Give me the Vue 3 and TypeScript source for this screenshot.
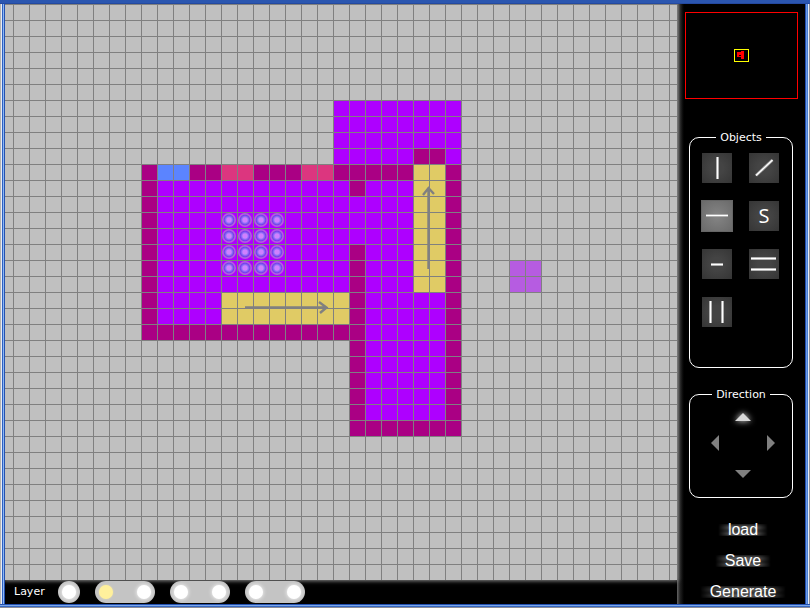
<script setup lang="ts">
import { ref } from 'vue'

const CELL = 16

interface Block {
  c: number
  r: number
  w: number
  h: number
  kind: 'floor' | 'wall' | 'glass' | 'door' | 'escalator' | 'pillar'
}

// Positions and sizes are counted in grid cells.
const blocks: Block[] = [
  { c: 20, r: 6, w: 8, h: 4, kind: 'floor' },
  { c: 8, r: 10, w: 13, h: 11, kind: 'floor' },
  { c: 21, r: 10, w: 7, h: 17, kind: 'floor' },
  { c: 8, r: 10, w: 20, h: 1, kind: 'wall' },
  { c: 8, r: 11, w: 1, h: 10, kind: 'wall' },
  { c: 9, r: 20, w: 12, h: 1, kind: 'wall' },
  { c: 21, r: 11, w: 1, h: 1, kind: 'wall' },
  { c: 21, r: 15, w: 1, h: 12, kind: 'wall' },
  { c: 22, r: 26, w: 6, h: 1, kind: 'wall' },
  { c: 27, r: 11, w: 1, h: 15, kind: 'wall' },
  { c: 25, r: 9, w: 2, h: 1, kind: 'wall' },
  { c: 9, r: 10, w: 2, h: 1, kind: 'glass' },
  { c: 13, r: 10, w: 2, h: 1, kind: 'door' },
  { c: 18, r: 10, w: 2, h: 1, kind: 'door' },
  { c: 25, r: 10, w: 2, h: 8, kind: 'escalator' },
  { c: 13, r: 18, w: 8, h: 2, kind: 'escalator' },
  { c: 31, r: 16, w: 2, h: 2, kind: 'pillar' },
]

const seats = Array.from({ length: 16 }, (_, i) => ({
  x: (13 + (i % 4)) * CELL + 8,
  y: (13 + Math.floor(i / 4)) * CELL + 8,
}))

const tools = [
  { id: 'vertical wall', d: 'M15.5 4V26' },
  { id: 'diagonal wall', d: 'M7 22.5L23.5 7' },
  { id: 'horizontal wall', d: 'M4 14.5H26' },
  { id: 'stairs', d: '' },
  { id: 'short wall', d: 'M9 15.5H21' },
  { id: 'horizontal corridor', d: 'M2 9.5H27M2 20.5H27' },
  { id: 'vertical corridor', d: 'M8.5 4V26M20.5 4V26' },
]

const directions = [
  { id: 'up', points: '0,12 8,4 16,12' },
  { id: 'left', points: '12,0 4,8 12,16' },
  { id: 'right', points: '4,0 12,8 4,16' },
  { id: 'down', points: '0,4 16,4 8,12' },
]

const layerGroups = [[0], [1, 2], [3, 4], [5, 6]]
const actions = ['load', 'Save', 'Generate']

const tool = ref('horizontal wall')
const direction = ref('up')
const layer = ref(1)
</script>

<template>
  <div class="window">
    <main class="editor">
      <svg class="map" role="img" aria-label="Floor plan">
        <defs>
          <pattern id="grid" width="16" height="16" patternUnits="userSpaceOnUse">
            <path d="M0 0H16V1H1V16H0Z" fill="#808080" />
          </pattern>
          <radialGradient id="seat">
            <stop offset="0" stop-color="#d080ff" />
            <stop offset=".3" stop-color="#d080ff" />
            <stop offset=".48" stop-color="#8c70f8" />
            <stop offset=".68" stop-color="#7440e8" />
            <stop offset=".84" stop-color="#b65be5" />
            <stop offset="1" stop-color="#b060d8" />
          </radialGradient>
        </defs>
        <svg x="8" class="sheet">
          <rect
            v-for="(b, i) in blocks"
            :key="i"
            :class="b.kind"
            :x="b.c * CELL"
            :y="b.r * CELL"
            :width="b.w * CELL"
            :height="b.h * CELL"
          />
          <rect x="-16" width="200%" height="100%" fill="url(#grid)" />
          <circle v-for="(s, i) in seats" :key="i" :cx="s.x" :cy="s.y" r="7" fill="url(#seat)" />
          <g class="arrow">
            <path d="M415.5 265V184M410 191L415.500 184L421 190" />
            <path d="M232 303.5H313M306 298L313.500 303.500L307 309" />
          </g>
        </svg>
      </svg>
      <form class="layers" @submit.prevent>
        <span class="caption">Layer</span>
        <div v-for="(group, g) in layerGroups" :key="g" class="pill">
          <input
            v-for="n in group"
            :key="n"
            v-model="layer"
            type="radio"
            name="layer"
            :value="n"
            :aria-label="`Layer ${n}`"
          />
        </div>
      </form>
    </main>

    <aside class="panel">
      <div class="minimap">
        <svg width="15" height="13" viewBox="0 0 15 13" aria-hidden="true">
          <rect x=".5" y=".5" width="14" height="12" fill="none" stroke="#ff0" />
          <path fill="#f00" d="M3 3H7V2H10V10H7V8H3Z" />
          <path fill="#000" d="M5 6H7V7H5Z" />
        </svg>
      </div>

      <fieldset class="objects">
        <legend>Objects</legend>
        <div class="tools">
          <button
            v-for="t in tools"
            :key="t.id"
            type="button"
            :class="{ active: tool === t.id }"
            :aria-label="t.id"
            @click="tool = t.id"
          >
            <svg v-if="t.d" width="30" height="30" viewBox="0 0 30 30" aria-hidden="true">
              <path class="halo" :d="t.d" />
              <path class="line" :d="t.d" />
            </svg>
            <span v-else>S</span>
          </button>
        </div>
      </fieldset>

      <fieldset class="direction">
        <legend>Direction</legend>
        <div class="pad">
          <button
            v-for="d in directions"
            :key="d.id"
            type="button"
            :class="[d.id, { active: direction === d.id }]"
            :aria-label="d.id"
            @click="direction = d.id"
          >
            <svg width="16" height="16" viewBox="0 0 16 16" aria-hidden="true">
              <polygon :points="d.points" />
            </svg>
          </button>
        </div>
      </fieldset>

      <div class="actions">
        <button v-for="a in actions" :key="a" type="button">{{ a }}</button>
      </div>
    </aside>
  </div>
</template>

<style>
body {
  background: #000;
}
</style>

<style scoped>
* {
  box-sizing: border-box;
}
.window {
  display: grid;
  grid-template-columns: minmax(0, 1fr) 128px;
  min-height: 100vh;
  padding: 4px 5px;
  background:
    linear-gradient(#2b56b0 3px, #2449a0 3px) top / 100% 4px no-repeat,
    linear-gradient(#2450b0 1px, #7ba7e8 1px 2px, #3467c4 2px 3px, #8c8c94 3px) bottom / 100% 4px no-repeat,
    linear-gradient(90deg, #b4b4b4 1px, #e8ecf4 1px 2px, #2f62c4 2px 3px, #8db8f4 3px 4px, #2450b0 4px) left / 5px 100% no-repeat,
    linear-gradient(90deg, #2450b0 1px, #6b9be6 1px 2px, #4b7fd4 2px 3px, #e4ecf8 3px 4px, #8c8c94 4px) right / 5px 100% no-repeat,
    #000;
  font-family: "DejaVu Sans", sans-serif;
  font-size: 11px;
  line-height: 18px;
  color: #fff;
}
.editor {
  display: flex;
  flex-direction: column;
  background: #000;
}
.map {
  display: block;
  flex: 1;
  width: 100%;
  min-height: 0;
  background: #c0c0c0;
  box-shadow: 0 0 4px 1px #888;
  clip-path: inset(0 -8px -8px 0);
  z-index: 1;
}
.sheet {
  overflow: visible;
}
.floor {
  fill: #ae00ff;
}
.wall {
  fill: #aa0084;
}
.glass {
  fill: #5b84ff;
}
.door {
  fill: #dc367f;
}
.escalator {
  fill: #e0cb65;
}
.pillar {
  fill: #b65ce1;
}
.arrow {
  fill: none;
  stroke: #808080;
  stroke-width: 2.4;
}
.layers {
  display: flex;
  align-items: center;
  gap: 15px;
  height: 24px;
  padding-left: 9px;
}
.caption {
  width: 29px;
}
.pill {
  display: flex;
  align-items: center;
  justify-content: space-between;
  width: 60px;
  height: 22px;
  padding: 0 4px;
  border-radius: 11px;
  background: #c4c4c4;
  z-index: 2;
}
.caption + .pill {
  width: 22px;
}
.pill input {
  appearance: none;
  width: 14px;
  height: 14px;
  margin: 0;
  border-radius: 50%;
  background: #fff;
  box-shadow: 0 0 4px #fff;
}
.pill input:checked {
  background: #fff09c;
  box-shadow: 0 0 2px #e8dfae;
}
.panel {
  position: relative;
  display: flex;
  flex-direction: column;
  padding: 8px 12px 0;
  background: linear-gradient(90deg, #666, #222 3px, #000 7px);
}
.minimap {
  display: flex;
  align-items: center;
  justify-content: center;
  height: 87px;
  margin: 0 -5px 30px -4px;
  border: 1px solid #f00;
  background: #000;
}
fieldset {
  min-width: 0;
  margin: 0;
  padding: 0;
  border: 1px solid #fff;
  border-radius: 10px;
}
legend {
  margin: 0 auto;
  padding: 0 4px;
  height: 16px;
}
button {
  display: flex;
  align-items: center;
  justify-content: center;
  padding: 0;
  border: 0;
  background: none;
  color: #fff;
  cursor: pointer;
}
.objects {
  height: 239px;
}
.tools {
  display: grid;
  grid-template-columns: 30px 30px;
  grid-auto-rows: 30px;
  gap: 18px 17px;
  padding: 8px 12px;
}
.tools button {
  background: radial-gradient(#444 30%, #353535);
  font: 20px/30px "Open Sans", sans-serif;
}
.tools .active {
  background: radial-gradient(#858585, #6a6a6a);
  box-shadow: 0 0 0 1px #666;
}
.tools path {
  fill: none;
}
.halo {
  stroke: #999;
  stroke-width: 3;
}
.line {
  stroke: #fff;
  stroke-width: 1.4;
}
.direction {
  height: 112px;
  margin-top: 18px;
}
.pad {
  display: grid;
  grid-template-columns: repeat(3, 28px);
  grid-template-rows: 29px 24px 38px;
  grid-template-areas: ". up ." "left . right" ". down .";
  justify-content: center;
  padding-left: 4px;
}
.pad polygon {
  fill: #808080;
}
.pad svg {
  overflow: visible;
}
.pad .active polygon {
  fill: #d8d8d8;
}
.pad .active svg {
  filter: drop-shadow(0 0 3px #eee);
}
.up {
  grid-area: up;
}
.left {
  grid-area: left;
}
.right {
  grid-area: right;
}
.down {
  grid-area: down;
}
.actions {
  display: flex;
  flex-direction: column;
  align-items: center;
  gap: 7px;
  margin-top: 20px;
  padding-left: 4px;
}
.actions button {
  position: relative;
  height: 24px;
  padding: 0 10px;
  font: 16px/24px "Liberation Sans", sans-serif;
  z-index: 0;
}
.actions button::before {
  content: "";
  position: absolute;
  inset: 6px 0;
  z-index: -1;
  background: repeating-linear-gradient(#333 0 2px, #666 3px 4px, #333 6px);
  mask-image: linear-gradient(90deg, transparent, #000 25% 75%, transparent);
  filter: blur(1px);
}
</style>
